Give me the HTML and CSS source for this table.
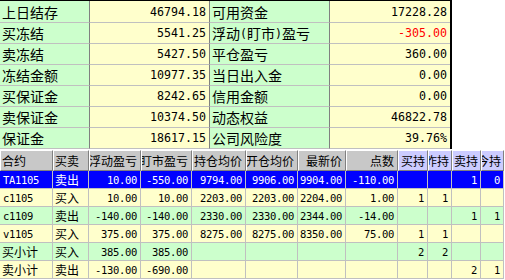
FILE: index.html
```html
<!DOCTYPE html>
<html>
<head>
<meta charset="utf-8">
<link rel="stylesheet" href="styles.css">
</head>
<body>
<div class="acct">
  <div class="lbl">上日结存</div><div class="val">46794.18</div><div class="lbl">可用资金</div><div class="val end">17228.28</div>
  <div class="lbl">买冻结</div><div class="val">5541.25</div><div class="lbl">浮动<span class="m">(</span>盯市<span class="m">)</span>盈亏</div><div class="val end neg">-305.00</div>
  <div class="lbl">卖冻结</div><div class="val">5427.50</div><div class="lbl">平仓盈亏</div><div class="val end">360.00</div>
  <div class="lbl">冻结金额</div><div class="val">10977.35</div><div class="lbl">当日出入金</div><div class="val end">0.00</div>
  <div class="lbl">买保证金</div><div class="val">8242.65</div><div class="lbl">信用金额</div><div class="val end">0.00</div>
  <div class="lbl">卖保证金</div><div class="val">10374.50</div><div class="lbl">动态权益</div><div class="val end">46822.78</div>
  <div class="lbl">保证金</div><div class="val">18617.15</div><div class="lbl">公司风险度</div><div class="val end">39.76%</div>
</div>
<div class="pos">
  <div class="h hl"><span>合约</span></div><div class="h hl"><span>买卖</span></div><div class="h"><span>浮动盈亏</span></div><div class="h"><span>盯市盈亏</span></div><div class="h"><span>持仓均价</span></div><div class="h"><span>开仓均价</span></div><div class="h"><span>最新价</span></div><div class="h"><span>点数</span></div><div class="h hv"><span>买持</span></div><div class="h hv"><span>昨持</span></div><div class="h hv"><span>卖持</span></div><div class="h hv"><span>今持</span></div>

  <div class="c sel code">TA1105</div><div class="c sel t">卖出</div><div class="c sel n">10.00</div><div class="c sel n">-550.00</div><div class="c sel n">9794.00</div><div class="c sel n">9906.00</div><div class="c sel n">9904.00</div><div class="c sel n">-110.00</div><div class="c sel n"></div><div class="c sel n"></div><div class="c sel n">1</div><div class="c sel n">0</div>

  <div class="c y code">c1105</div><div class="c y t">买入</div><div class="c y n">10.00</div><div class="c y n">10.00</div><div class="c y n">2203.00</div><div class="c y n">2203.00</div><div class="c y n">2204.00</div><div class="c y n">1.00</div><div class="c y n">1</div><div class="c y n">1</div><div class="c y n"></div><div class="c y n"></div>

  <div class="c g code">c1109</div><div class="c g t">卖出</div><div class="c g n">-140.00</div><div class="c g n">-140.00</div><div class="c g n">2330.00</div><div class="c g n">2330.00</div><div class="c g n">2344.00</div><div class="c g n">-14.00</div><div class="c g n"></div><div class="c g n"></div><div class="c g n">1</div><div class="c g n">1</div>

  <div class="c y code">v1105</div><div class="c y t">买入</div><div class="c y n">375.00</div><div class="c y n">375.00</div><div class="c y n">8275.00</div><div class="c y n">8275.00</div><div class="c y n">8350.00</div><div class="c y n">75.00</div><div class="c y n">1</div><div class="c y n">1</div><div class="c y n"></div><div class="c y n"></div>

  <div class="c g t">买小计</div><div class="c g t">买入</div><div class="c g n">385.00</div><div class="c g n">385.00</div><div class="c g n"></div><div class="c g n"></div><div class="c g n"></div><div class="c g n"></div><div class="c g n">2</div><div class="c g n">2</div><div class="c g n"></div><div class="c g n"></div>

  <div class="c y t">卖小计</div><div class="c y t">卖出</div><div class="c y n">-130.00</div><div class="c y n">-690.00</div><div class="c y n"></div><div class="c y n"></div><div class="c y n"></div><div class="c y n"></div><div class="c y n"></div><div class="c y n"></div><div class="c y n">2</div><div class="c y n">1</div>
</div>
</body>
</html>
```

FILE: styles.css
```css
html, body {
  margin: 0;
  padding: 0;
  background: #ffffff;
}

body {
  width: 505px;
  height: 280px;
  overflow: hidden;
  color: #000000;
}

.acct {
  display: grid;
  grid-template-columns: 90px 120px 120px 120px;
  grid-template-rows: 22px repeat(6, 21px);
  width: 450px;
  border-top: 1px solid #000000;
  border-right: 2px solid #000000;
}

.acct > div {
  box-sizing: border-box;
  display: flex;
  align-items: center;
  white-space: nowrap;
  overflow: hidden;
  border-bottom: 1px solid #c0c0c0;
  border-right: 1px solid #808080;
}

.acct > .end {
  border-right: none;
}

.lbl {
  background: #ccffcc;
  padding-left: 2px;
  font-family: "Noto Sans CJK SC", sans-serif;
  font-size: 14px;
  line-height: 16px;
}

.m {
  font-family: "DejaVu Sans Mono", monospace;
  font-size: 11.63px;
  display: inline-block;
  width: 7px;
  text-align: right;
}

.val {
  background: #ffffcc;
  justify-content: flex-end;
  padding-right: 3px;
  font-family: "DejaVu Sans Mono", monospace;
  font-size: 11.63px;
  line-height: 14px;
}

.neg {
  color: #ff0000;
}

.pos {
  margin-top: 1px;
  display: grid;
  grid-template-columns: 53px 36px 52px 51px 54px 52px 48px 52px 30px 24px 29px 23px;
  grid-template-rows: 21px;
  grid-auto-rows: 18px;
  width: 504px;
}

.h {
  box-sizing: border-box;
  display: flex;
  align-items: center;
  justify-content: flex-end;
  overflow: hidden;
  white-space: nowrap;
  padding-right: 3px;
  background: #c8c8c8;
  border-top: 1px solid #ffffff;
  border-left: 1px solid #ffffff;
  border-right: 1px solid #808080;
  border-bottom: 1px solid #808080;
  font-family: "Noto Sans CJK SC", sans-serif;
  font-size: 12px;
  line-height: 14px;
}

.h > span {
  flex: none;
}

.hl {
  justify-content: flex-start;
  padding-left: 1px;
}

.hv {
  background: #ccccff;
  padding-right: 2px;
}

.c {
  box-sizing: border-box;
  display: flex;
  align-items: center;
  overflow: hidden;
  white-space: nowrap;
  border-right: 1px solid #c0c0c0;
  border-bottom: 1px solid #c0c0c0;
}

.y {
  background: #ffffcc;
}

.g {
  background: #ccffcc;
}

.sel {
  background: #0000ff;
  color: #ffffff;
}

.n {
  justify-content: flex-end;
  padding-right: 3px;
  font-family: "DejaVu Sans Mono", monospace;
  font-size: 10.5px;
  letter-spacing: -0.32px;
  line-height: 12px;
}

.code {
  padding-left: 3px;
  font-family: "DejaVu Sans Mono", monospace;
  font-size: 10.5px;
  letter-spacing: -0.32px;
  line-height: 12px;
}

.t {
  padding-left: 2px;
  font-family: "Noto Sans CJK SC", sans-serif;
  font-size: 12px;
  line-height: 14px;
}
```
